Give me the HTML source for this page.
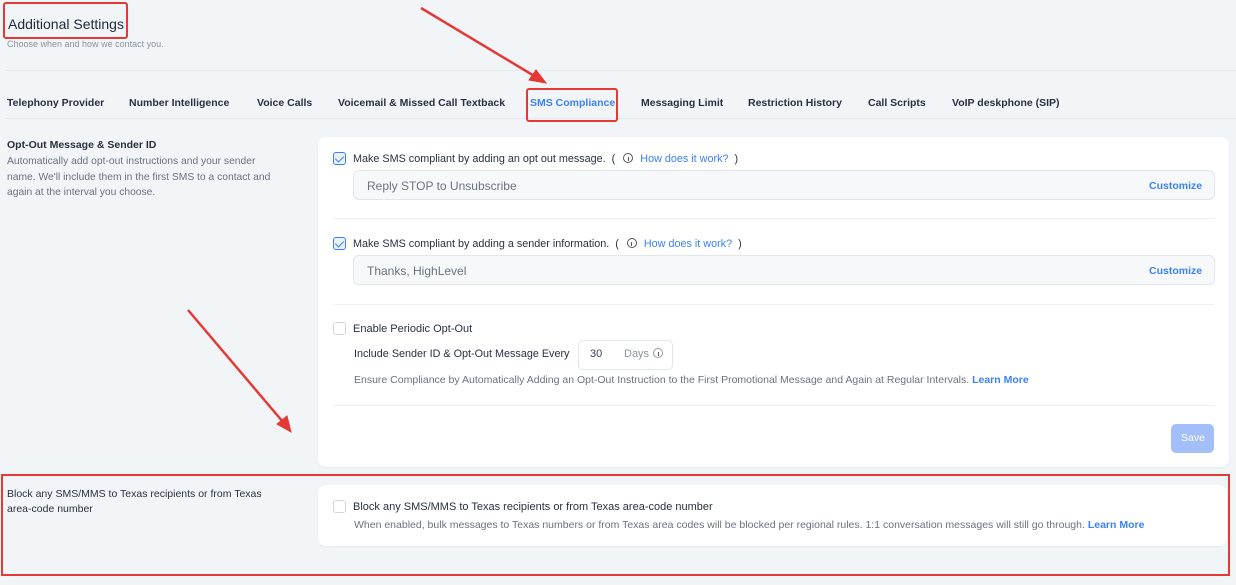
<!DOCTYPE html>
<html><head><style>
*{box-sizing:border-box;margin:0;padding:0}
body{width:1236px;height:585px;background:#f2f5f8;font-family:"Liberation Sans",sans-serif;position:relative;overflow:hidden;color:#1f2937}
.a{position:absolute;white-space:nowrap}
.tab{position:absolute;top:97px;font-size:10.5px;font-weight:bold;color:#283140}
.card{position:absolute;background:#fff;border-radius:8px;box-shadow:0 1px 2px rgba(0,0,0,.05)}
.cb{position:absolute;width:13px;height:13px;border:1px solid #d1d5db;border-radius:3px;background:#fff}
.cb.on{border-color:#3b82f6;background:#eaf1fe}
.cb.on:after{content:"";position:absolute;left:3px;top:1px;width:4px;height:7px;border:solid #3b82f6;border-width:0 1.5px 1.5px 0;transform:rotate(45deg)}
.lbl{font-size:11px;color:#283140}
.blue{color:#3b82f6}
.inp{position:absolute;background:#f7f8fa;border:1px solid #e3e6ea;border-radius:6px;height:30px}
.hr{position:absolute;height:1px;background:#eceef1}
.info{display:inline-block;width:10px;height:10px;border:1px solid #555;border-radius:50%;vertical-align:-1px;margin:0 4px;position:relative}
.info:after{content:"";position:absolute;left:3.5px;top:2.5px;width:1px;height:4px;background:#555}
.red{position:absolute;border:2px solid #e53935;border-radius:3px}
</style></head><body>
<div class="a" style="left:8px;top:16px;font-size:14px;color:#1f2937">Additional Settings</div>
<div class="a" style="left:7px;top:39px;font-size:9px;color:#8a93a0">Choose when and how we contact you.</div>
<div style="position:absolute;left:5px;top:70px;width:1231px;height:1px;background:#e6e9ed"></div>
<div class="tab" style="left:7px">Telephony Provider</div>
<div class="tab" style="left:129px">Number Intelligence</div>
<div class="tab" style="left:257px">Voice Calls</div>
<div class="tab" style="left:338px">Voicemail &amp; Missed Call Textback</div>
<div class="tab" style="left:530px;color:#3b82f6">SMS Compliance</div>
<div class="tab" style="left:641px">Messaging Limit</div>
<div class="tab" style="left:748px">Restriction History</div>
<div class="tab" style="left:868px">Call Scripts</div>
<div class="tab" style="left:952px">VoIP deskphone (SIP)</div>
<div style="position:absolute;left:5px;top:118px;width:1231px;height:1px;background:#e6e9ed"></div>

<div class="a" style="left:7px;top:139px;font-size:10.5px;font-weight:bold;color:#283140">Opt-Out Message &amp; Sender ID</div>
<div class="a" style="left:7px;top:154px;font-size:10.3px;color:#6b7280;line-height:15.5px">Automatically add opt-out instructions and your sender<br>name. We'll include them in the first SMS to a contact and<br>again at the interval you choose.</div>

<div class="card" style="left:318px;top:137px;width:911px;height:330px"></div>
<div class="cb on" style="left:333px;top:152px"></div>
<div class="a lbl" style="left:353px;top:153px;font-size:10.8px">Make SMS compliant by adding an opt out message. &nbsp;(<span class="info" style="margin-left:8px"></span> <span class="blue">How does it work?</span> &nbsp;)</div>
<div class="inp" style="left:353px;top:170px;width:862px"></div>
<div class="a" style="left:367px;top:179px;font-size:12px;color:#6b7280">Reply STOP to Unsubscribe</div>
<div class="a" style="left:1149px;top:180px;font-size:10.5px;font-weight:bold;color:#3b82f6">Customize</div>
<div class="hr" style="left:333px;top:218px;width:881px"></div>

<div class="cb on" style="left:333px;top:237px"></div>
<div class="a lbl" style="left:353px;top:238px;font-size:10.8px">Make SMS compliant by adding a sender information. &nbsp;(<span class="info" style="margin-left:8px"></span> <span class="blue">How does it work?</span> &nbsp;)</div>
<div class="inp" style="left:353px;top:255px;width:862px"></div>
<div class="a" style="left:367px;top:264px;font-size:12px;color:#6b7280">Thanks, HighLevel</div>
<div class="a" style="left:1149px;top:265px;font-size:10.5px;font-weight:bold;color:#3b82f6">Customize</div>
<div class="hr" style="left:333px;top:304px;width:881px"></div>

<div class="cb" style="left:333px;top:322px"></div>
<div class="a lbl" style="left:353px;top:323px">Enable Periodic Opt-Out</div>
<div class="a lbl" style="left:354px;top:348px;font-size:10.8px">Include Sender ID &amp; Opt-Out Message Every</div>
<div style="position:absolute;left:578px;top:340px;width:95px;height:30px;border:1px solid #e3e6ea;border-radius:5px;background:#fff"></div>
<div class="a" style="left:590px;top:348px;font-size:11px;color:#374151">30</div>
<div class="a" style="left:624px;top:348px;font-size:11px;color:#8a93a0">Days<span class="info" style="border-color:#999;margin-left:4px"></span></div>
<div class="a" style="left:354px;top:374px;font-size:10.5px;color:#6b7280">Ensure Compliance by Automatically Adding an Opt-Out Instruction to the First Promotional Message and Again at Regular Intervals. <b class="blue">Learn More</b></div>
<div class="hr" style="left:333px;top:405px;width:881px"></div>
<div style="position:absolute;left:1171px;top:424px;width:43px;height:29px;border-radius:5px;background:#a3bffa"></div>
<div class="a" style="left:1181px;top:432px;font-size:10.5px;color:#fff">Save</div>

<div class="a" style="left:7px;top:487px;font-size:10.5px;color:#283140;line-height:15px">Block any SMS/MMS to Texas recipients or from Texas<br>area-code number</div>
<div class="card" style="left:318px;top:485px;width:909px;height:61px"></div>
<div class="cb" style="left:333px;top:500px"></div>
<div class="a lbl" style="left:353px;top:501px">Block any SMS/MMS to Texas recipients or from Texas area-code number</div>
<div class="a" style="left:354px;top:519px;font-size:10.5px;color:#6b7280">When enabled, bulk messages to Texas numbers or from Texas area codes will be blocked per regional rules. 1:1 conversation messages will still go through. <b class="blue">Learn More</b></div>

<div class="red" style="left:3px;top:2px;width:125px;height:37px"></div>
<div class="red" style="left:526px;top:88px;width:92px;height:34px"></div>
<div class="red" style="left:1px;top:474px;width:1229px;height:102px;border-radius:0"></div>
<svg style="position:absolute;left:0;top:0" width="1236" height="585">
<g stroke="#e53935" stroke-width="2.5" fill="#e53935">
<line x1="421" y1="8" x2="536" y2="77"/>
<polygon points="546,83 529,80 536,70" stroke-width="1"/>
<line x1="188" y1="310" x2="283" y2="422"/>
<polygon points="291,432 277,424 287,416" stroke-width="1"/>
</g></svg>
</body></html>
